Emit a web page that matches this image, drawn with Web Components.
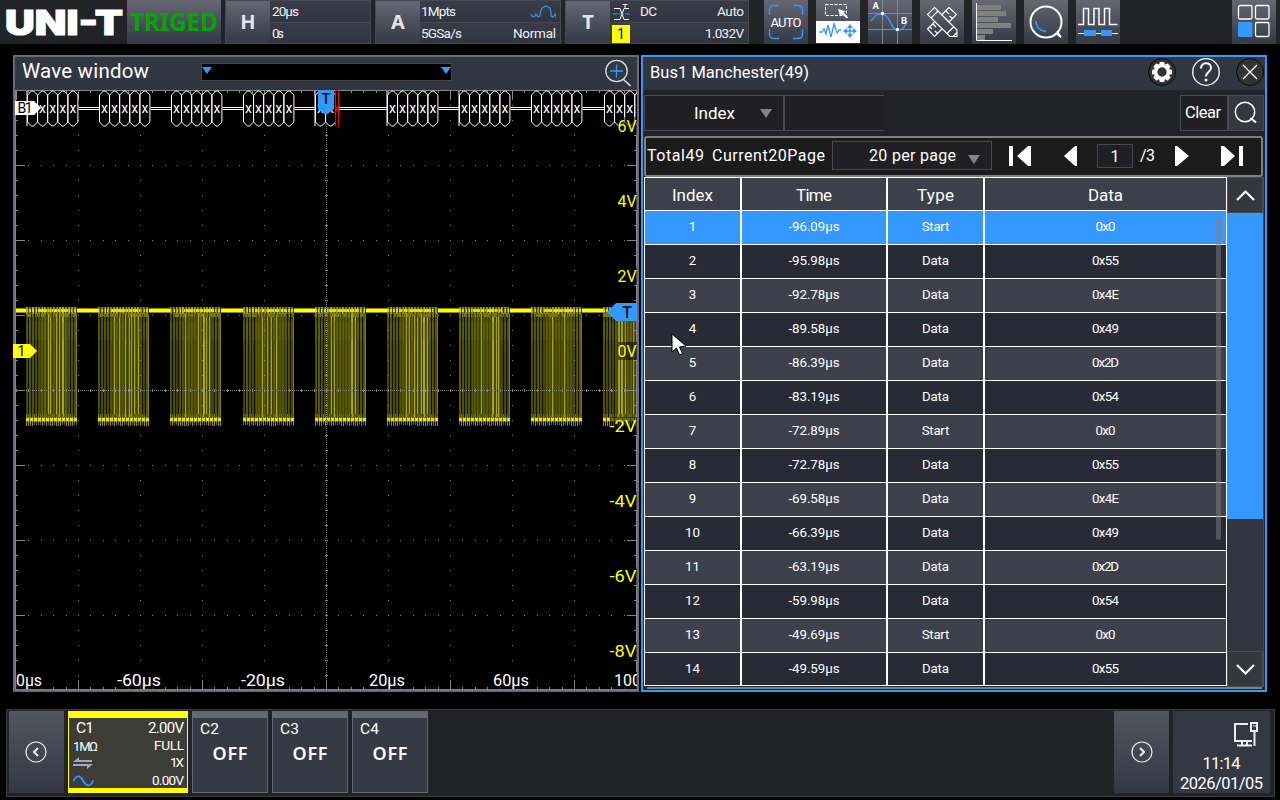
<!DOCTYPE html>
<html lang="en">
<head>
<meta charset="utf-8">
<title>Oscilloscope</title>
<style>
  html, body { margin: 0; background: #000; }
  body {
    width: 1280px;
    height: 800px;
    overflow: hidden;
    font-family: Roboto, "Liberation Sans", sans-serif;
    color: #fff;
    --blue: #3398ff;
    --bar: #222327;
    --face: linear-gradient(#666773, #3a404b 85%, #363c46);
  }
</style>
</head>
<body>
<scope-app></scope-app>

<script>
// Text that is tracked in or out to fill a given width
class FitText extends HTMLElement {
  constructor() {
    super();
    this.attachShadow({ mode: "open" });
    this.shadowRoot.innerHTML = "<style>:host { display: inline-flex; white-space: pre; line-height: 1; }</style><span><slot></slot></span>";
  }

  connectedCallback() {
    const span = this.shadowRoot.querySelector("span");
    const size = this.getAttribute("size");
    if (size) this.style.fontSize = size + "px";
    const width = Number(this.getAttribute("w"));
    const count = this.textContent.length;
    if (!width || count < 2) return;
    const natural = span.getBoundingClientRect().width;
    const spacing = (width - natural) / (count - 1);
    span.style.letterSpacing = spacing + "px";
    span.style.marginRight = -spacing + "px";
  }
}

class ReadoutBox extends HTMLElement {
  constructor() {
    super();
    this.attachShadow({ mode: "open" });
    this.shadowRoot.innerHTML = `
      <style>
        :host { display: flex; box-sizing: border-box; height: 44px; border: 1px solid #464953; background: #333741; margin-right: 4px; }
        .key { width: 44px; display: flex; align-items: center; justify-content: center; background: var(--face); font-family: "Noto Sans", sans-serif; font-weight: 700; font-size: 20px; line-height: 1; color: #e4e4e6; }
        .lines { flex: 1; display: grid; grid-template-rows: 21px 20px; row-gap: 1px; background: #464953; }
        .line { display: flex; align-items: center; justify-content: space-between; background: linear-gradient(#383c47, #31353f); padding: 1px 4px 0 2px; font-size: 13.5px; color: #f0f0f0; box-sizing: border-box; }
      </style>
      <div class="key"></div>
      <div class="lines">
        <div class="line"><slot name="top"></slot><slot name="top-end"></slot></div>
        <div class="line"><slot name="bottom"></slot><slot name="bottom-end"></slot></div>
      </div>
    `;
  }

  connectedCallback() {
    this.shadowRoot.querySelector(".key").textContent = this.getAttribute("key");
  }
}

class ToolButton extends HTMLElement {
  constructor() {
    super();
    this.attachShadow({ mode: "open" });
    this.shadowRoot.innerHTML = `
      <style>
        :host { display: block; width: 44px; height: 44px; background: var(--face); }
        ::slotted(svg) { display: block; }
      </style>
      <slot></slot>
    `;
  }
}

class TopBar extends HTMLElement {
  constructor() {
    super();
    this.attachShadow({ mode: "open" });
    this.shadowRoot.innerHTML = `
      <style>
        :host { display: flex; height: 44px; background: var(--bar); }
        .logo { width: 127px; height: 44px; }
        .state { width: 94px; height: 44px; margin-right: 4px; background: var(--face); display: flex; align-items: center; justify-content: center; color: #00a800; font-family: "Noto Sans", sans-serif; font-weight: 700; }
        .tools { display: flex; gap: 8px; margin-left: 11px; }
        .apps { margin-left: auto; margin-right: 4px; }
        svg { display: block; }
        .source { display: flex; align-items: center; gap: 10px; }
        .ch { width: 18px; height: 18px; background: #ff0; color: #000; display: flex; align-items: center; justify-content: center; font-size: 14px; }
      </style>
      <svg class="logo" viewBox="0 0 127 44">
        <text x="5" y="34.5" font-family="Inter, sans-serif" font-weight="900" font-size="33.5" fill="#fff" stroke="#fff" textLength="118" lengthAdjust="spacingAndGlyphs">UNI-T</text>
      </svg>
      <div class="state"><fit-text size="24.5" w="88">TRIGED</fit-text></div>
      <readout-box key="H" style="width:146px">
        <fit-text slot="top" w="27">20µs</fit-text>
        <fit-text slot="bottom" w="12">0s</fit-text>
      </readout-box>
      <readout-box key="A" style="width:186px">
        <fit-text slot="top" w="35" style="margin-left:-1px">1Mpts</fit-text>
        <svg slot="top-end" width="26" height="14" fill="none" stroke="#3398ff" stroke-width="1.2"><path d="M1 9l2 3 2-1 1-2 2 3 2-1V8l2-5 2-1 2-1 2 1 2 1 1 5v3l2 1 2-3 1 3 2-3"/></svg>
        <fit-text slot="bottom" w="41" style="margin-left:-1px">5GSa/s</fit-text>
        <fit-text slot="bottom-end" w="43">Normal</fit-text>
      </readout-box>
      <readout-box key="T" style="width:184px">
        <div slot="top" class="source">
          <svg width="18" height="19" fill="none" stroke="#fff"><path d="M2 5.5h6l4 11h5M17 5.5h-5l-4 11H2M10.500 1.500h5M13 2v3"/><path d="M1 11h17" stroke="#3398ff" stroke-dasharray="5 1"/></svg>
          <fit-text w="17">DC</fit-text>
        </div>
        <fit-text slot="top-end" w="27">Auto</fit-text>
        <div slot="bottom" class="ch">1</div>
        <fit-text slot="bottom-end" w="39">1.032V</fit-text>
      </readout-box>
      <div class="tools">
        <tool-button><svg width="44" height="44">
          <path d="M5.500 15V10q0-4.500 4.500-4.500h5M29 5.500h5q4.500 0 4.500 4.500v5M38.500 29v5q0 4.500-4.500 4.500h-5M15 38.500h-5q-4.500 0-4.500-4.500v-5" fill="none" stroke="#3398ff" stroke-width="1.400"/>
          <text x="6.500" y="26.500" font-size="13" fill="#fff" textLength="31">AUTO</text></svg></tool-button>
        <tool-button><svg width="44" height="44">
          <rect y="21" width="44" height="22" fill="#fff"/>
          <rect x="9.500" y="4.500" width="21" height="11" fill="none" stroke="#fff" stroke-dasharray="3 1.500"/>
          <path d="M22 9l2 7 1.800-1.800 5.200 4.300 1-1.200-4.500-5 2.500-1z" fill="#fff"/>
          <path d="M3 32h3l2-3 2 5 2-9 3 12 3-13 3 9 2-3h2" fill="none" stroke="#3398ff" stroke-width="1.300"/>
          <path d="M28 31h12M34 25v12" stroke="#3398ff" stroke-width="1.500"/>
          <path d="M34 24l3 4h-6zM34 38l3-4h-6zM27 31l4-3v6zM41 31l-4-3v6z" fill="#3398ff"/></svg></tool-button>
        <tool-button><svg width="44" height="44">
          <path d="M0 13.500h44M0 29.500h44M14.500 0v44M29.500 0v44" stroke="#868894"/>
          <path d="M3 21C8 14 12 12 17 15C23 19 23 30 30 30C35 30 37 27 39 21" fill="none" stroke="#3398ff" stroke-width="1.500"/>
          <circle cx="14.500" cy="13.500" r="1.700" fill="#fff"/><circle cx="29.500" cy="29.500" r="1.700" fill="#fff"/>
          <text x="4.500" y="9" font-size="9.500" font-weight="700" fill="#fff">A</text>
          <text x="33" y="24" font-size="9.500" font-weight="700" fill="#fff">B</text></svg></tool-button>
        <tool-button><svg width="44" height="44" fill="none" stroke="#fff" stroke-width="1.100">
          <path d="M14.500 7.500L37 30v6.500h-7L7.500 14.500zM11 18l7-7M27 33.500l6.500-6.500M33 36.500l4-4"/>
          <path d="M29 7.500l7.500 7L29 22M22 29l-7.500 7.500-7-7.500 7.500-7.500M21.500 15L29 7.500M32.500 18.500l-3-2.500M29 22l-3-3M13 24l3 3M10 27l2 2M17 33l-2-2M26 11l3 3"/></svg></tool-button>
        <tool-button><svg width="44" height="44">
          <path d="M5 5h24v5H5zM5 11h29v5H5zM5 17h21v5H5zM5 23h34v5H5zM5 29h16v5H5zM5 35h8v5H5z" fill="#808080"/>
          <path d="M4.500 3v37.500H40" fill="none" stroke="#fff"/></svg></tool-button>
        <tool-button><svg width="44" height="44" fill="none">
          <circle cx="22" cy="22" r="15.500" stroke="#fff" stroke-width="2"/>
          <path d="M31.500 33l5.500 4.500M33 31l4 6" stroke="#fff" stroke-width="1.500"/>
          <path d="M12 21C12 27 16 31 22 31.500" stroke="#3398ff" stroke-width="1.800"/></svg></tool-button>
        <tool-button><svg width="44" height="44" fill="none">
          <path d="M2 24.500h5.500v-16h5v16h5.500v-16h5v16h5.500v-16h5v16h8" stroke="#fff" stroke-width="1.500"/>
          <path d="M2 33.500h40" stroke="#fff"/><path d="M8 30h12v6H8zM25 30h11v6H25z" fill="#3398ff"/></svg></tool-button>
      </div>
      <tool-button class="apps"><svg width="44" height="44" fill="none" stroke="#fff" stroke-width="1.300">
        <rect x="6.500" y="5.500" width="13.500" height="13.500" rx="1.500"/><rect x="23.500" y="5.500" width="13.500" height="13.500" rx="1.500"/>
        <rect x="6" y="22" width="14.500" height="15" rx="1.500" fill="#3398ff" stroke="none"/><rect x="23.500" y="22.500" width="13.500" height="14" rx="1.500"/></svg></tool-button>
    `;
  }
}

// Graticule, bus decode row and channel 1 trace
class WavePlot extends HTMLElement {
  constructor() {
    super();
    this.attachShadow({ mode: "open" });
    this.shadowRoot.innerHTML = `
      <style>
        :host { display: block; height: 600px; background: #000; }
        svg { display: block; overflow: visible; font-size: 16px; }
      </style>
      <svg width="622" height="600" viewBox="15 90 622 600">
        <defs><clipPath id="area"><rect x="15" y="90" width="622" height="600"/></clipPath></defs>
        <g clip-path="url(#area)">
          <g id="trace" shape-rendering="crispEdges"></g>
          <path id="grid" stroke="#858585" fill="none" shape-rendering="crispEdges"/>
          <g id="bus"></g>
          <g id="labels"></g>
        </g>
        <path d="M15 101h19l7 7-7 7H15z" fill="#fff"/>
        <text x="17.500" y="113" font-size="14" fill="#000" textLength="15">B1</text>
        <path d="M318 90h16v19l-8 6-8-6z" fill="#3398ff"/>
        <text x="326" y="104" text-anchor="middle" font-size="15" font-weight="500" fill="#111">T</text>
        <path d="M13 344h17l7 7-7 7H13z" fill="#ff0"/>
        <text x="21.500" y="356" text-anchor="middle" font-size="14" fill="#000">1</text>
        <path d="M607 312l9-9h21v18h-21z" fill="#3398ff"/>
        <text x="627" y="318" text-anchor="middle" font-size="16" font-weight="500" fill="#111">T</text>
      </svg>
    `;
  }

  connectedCallback() {
    this.drawGrid();
    this.drawTrace();
    this.drawBus();
    this.drawLabels();
  }

  drawGrid() {
    let d = "M15 90.5H637M15.5 90V690M15 689.5H637M636.500 90V690";
    const dot = (x, y) => { d += `M${Math.round(x)} ${y + 0.5}h1`; };
    for (let i = 0; i <= 50; i++) {
      const x = 16 + i * 12.4;
      const major = i % 5 === 0;
      for (let y = 165; y < 690; y += 75) if (y !== 390) dot(x, y);
      d += `M${Math.round(x) + 0.5} 90v${major ? 10 : 3}M${Math.round(x) + 0.5} 690v${major ? -10 : -3}`;
      d += `M${Math.round(x) + 0.5} 389v3`;
    }
    for (let j = 0; j <= 40; j++) {
      const y = 90 + j * 15;
      const len = j % 5 === 0 ? 10 : 3;
      for (let x = 78; x < 636; x += 62) if (x !== 326) dot(x, y);
      d += `M15 ${y + 0.5}h${len}M637 ${y + 0.5}h${-len}M325 ${y + 0.5}h3`;
    }
    for (let x = 16; x < 637; x += 2) dot(x, 390);
    for (let y = 90; y < 690; y += 2) dot(326, y);
    this.shadowRoot.getElementById("grid").setAttribute("d", d);
  }

  drawTrace() {
    let out = "";
    let seed = 7;
    const random = () => (seed = (seed * 16807) % 2147483647) / 2147483647;
    const bar = (x, y, w, h, color) => {
      out += `<rect x="${x}" y="${y}" width="${w}" height="${h}" fill="${color}"/>`;
    };
    bar(15, 308, 12, 5, "#8a8a00");
    bar(15, 309, 12, 3, "#ff0");
    for (let g = 0; g < 9; g++) {
      const start = Math.round(26.2 + g * 72.12);
      bar(start + 51, 308, 22, 5, "#8a8a00");
      bar(start + 51, 309, 22, 3, "#ff0");
      for (let c = 0; c < 51; c++) {
        const x = start + c;
        const middle = c > 13 && c < 42;
        const r = random();
        const gap = c % 3 === 2;
        let v = gap ? (middle ? 62 : 14) : 66 + r * 24;
        if (!gap && middle) v += 12;
        if (!gap && middle && r > 0.7) v = 145 + r * 30;
        if (c === 50) v = 125;
        v = Math.round(v);
        bar(x, 312, 1, 106, `rgb(${v},${v},0)`);
        if (!gap) bar(x, 322, 1, 18, "rgba(120,120,0,.25)");
        const hi = gap ? 50 : 110 + Math.round(random() * 70);
        bar(x, 307, 1, 7, `rgb(${hi},${hi},0)`);
        if (!gap || middle) bar(x, 309, 1, 3, random() > 0.3 ? "#e0e000" : "#a0a000");
        if (random() > 0.4) bar(x, 313, 1, 4, "#777700");
        if (c % 2 === 0) bar(x, 414, 1, 11, "#6a6a00");
        if (c % 2 === 0 && random() > 0.5) bar(x, 421, 1, 5, "#909000");
        bar(x, 417, 1, 5, c % 2 === 0 ? "#a0a000" : "#454500");
        bar(x, 418, 1, 3, c % 4 === 3 ? "#606000" : "#e6e600");
      }
    }
    this.shadowRoot.getElementById("trace").innerHTML = out;
  }

  drawBus() {
    let cells = "";
    let idle = "";
    let marks = "";
    for (let g = 0; g < 9; g++) {
      const start = Math.round(26.7 + g * 72.1) + 0.5;
      const count = g === 4 ? 2 : 5;
      const end = g === 4 ? 339 : start + 51;
      const next = Math.round(26.7 + (g + 1) * 72.1);
      idle += `M${end} 107.500H${next}M${end} 109.500H${next}`;
      for (let i = 0; i < count; i++) {
        const x = start + i * 10.1;
        cells += `M${x} 95l4-4h2l4 4v27l-4 4h-2l-4-4z`;
        // the first mark of the row lies under the bus badge
        if (g || i) marks += `<text x="${x + 5}" y="113" text-anchor="middle">x</text>`;
      }
      if ([0, 4, 5, 6].includes(g)) cells += `M${start - 0.5} 91v35`;
    }
    this.shadowRoot.getElementById("bus").innerHTML = `
      <path d="M36 107.500h2${idle}" stroke="#fff" fill="none"/>
      <path d="${cells}" stroke="#fff" fill="#000"/>
      <g fill="#fff" font-size="14">${marks}</g>
      <rect x="335.500" y="90.500" width="3" height="36" rx="1" stroke="red" fill="#000"/>
      <text x="337" y="113" font-size="14" fill="red" text-anchor="middle">x</text>
    `;
  }

  drawLabels() {
    let out = "";
    ["6V", "4V", "2V", "0V", "-2V", "-4V", "-6V", "-8V"].forEach((text, i) => {
      const w = text.length === 3 ? 27 : 19;
      out += `<rect x="${637 - w}" y="${117 + i * 75}" width="${w}" height="18" fill="#000" opacity=".5"/>
        <text x="${636.500 - w}" y="${132 + i * 75}" fill="#ff0" font-size="16.500" textLength="${w}" lengthAdjust="spacingAndGlyphs">${text}</text>`;
    });
    [["0µs", 16, 26], ["-60µs", 117, 44], ["-20µs", 241, 44], ["20µs", 369, 36], ["60µs", 493, 36], ["100", 614, 27]].forEach(([text, x, w]) => {
      out += `<rect x="${x}" y="672" width="${w}" height="17" fill="#000" opacity=".7"/>
        <text x="${x}" y="686" fill="#fff" textLength="${w}" lengthAdjust="spacingAndGlyphs">${text}</text>`;
    });
    this.shadowRoot.getElementById("labels").innerHTML = out;
  }
}

class WaveWindow extends HTMLElement {
  constructor() {
    super();
    this.attachShadow({ mode: "open" });
    this.shadowRoot.innerHTML = `
      <style>
        :host { display: block; box-sizing: border-box; width: 626px; height: 637px; border: 2px solid #696b78; }
        header { display: flex; align-items: center; height: 33px; background: linear-gradient(#343741, #2f3641); }
        .title { width: 186px; padding-left: 7px; box-sizing: border-box; margin-top: -4px; }
        .range { box-sizing: border-box; width: 251px; height: 18px; margin-top: -3px; border: 1px solid #444; background: #000; display: flex; justify-content: space-between; }
        .range svg { margin-top: 3px; }
        .zoom { margin-left: auto; margin-right: 6px; }
      </style>
      <header>
        <fit-text class="title" size="20.500" w="127">Wave window</fit-text>
        <div class="range">
          <svg width="11" height="8"><path d="M0 0h10l-5 7z" fill="#3398ff"/></svg>
          <svg width="11" height="8"><path d="M1 0h10l-5 7z" fill="#3398ff"/></svg>
        </div>
        <svg class="zoom" width="28" height="30" fill="none">
          <circle cx="13.500" cy="12" r="10.700" stroke="#ddd" stroke-width="1.300"/><path d="M20 20l7.500 7" stroke="#ddd" stroke-width="1.600"/>
          <path d="M7 12h13M13.500 5.500v13" stroke="#3398ff" stroke-width="1.300"/></svg>
      </header>
      <wave-plot></wave-plot>
    `;
  }
}

const eventRows = [
  ["1", "-96.09µs", "Start", "0x0"],
  ["2", "-95.98µs", "Data", "0x55"],
  ["3", "-92.78µs", "Data", "0x4E"],
  ["4", "-89.58µs", "Data", "0x49"],
  ["5", "-86.39µs", "Data", "0x2D"],
  ["6", "-83.19µs", "Data", "0x54"],
  ["7", "-72.89µs", "Start", "0x0"],
  ["8", "-72.78µs", "Data", "0x55"],
  ["9", "-69.58µs", "Data", "0x4E"],
  ["10", "-66.39µs", "Data", "0x49"],
  ["11", "-63.19µs", "Data", "0x2D"],
  ["12", "-59.98µs", "Data", "0x54"],
  ["13", "-49.69µs", "Start", "0x0"],
  ["14", "-49.59µs", "Data", "0x55"],
];

class EventTable extends HTMLElement {
  constructor() {
    super();
    this.attachShadow({ mode: "open" });
    this.shadowRoot.innerHTML = `
      <style>
        :host { display: flex; height: 510px; position: relative; }
        .grid { box-sizing: border-box; width: 583px; height: 509px; padding: 1px; background: #fff; display: grid; grid-template-columns: 95px 144px 95px 241px; grid-template-rows: 32px repeat(13, 33px) 32px; gap: 1px 2px; }
        .cell { display: flex; align-items: center; justify-content: center; font-size: 13.300px; padding-bottom: 1px; box-sizing: border-box; background: #3e414b; }
        .head { font-size: 17px; background: #3c404a; padding: 2px 0 0; }
        .even { background: #282b35; }
        .active { background: var(--blue); }
        .thumb { position: absolute; left: 572px; top: 39px; width: 5px; height: 324px; border-radius: 2px; background: rgba(128, 128, 128, .5); }
        .scroll { width: 37px; display: flex; flex-direction: column; background: #323640; box-sizing: border-box; border-right: 1px solid #484a52; }
        .step { box-sizing: border-box; height: 36px; flex: none; border: 1px solid #4a4b53; background: #36363e; }
        .pos { height: 306px; background: var(--blue); }
        .step:last-child { margin-top: auto; }
      </style>
      <div class="grid"></div>
      <div class="thumb"></div>
      <div class="scroll">
        <div class="step"><svg width="34" height="34"><path d="M9 22l8.500-8.500L26 22" fill="none" stroke="#fff" stroke-width="2.200"/></svg></div>
        <div class="pos"></div>
        <div class="step"><svg width="34" height="34"><path d="M9 13l8.500 8.500L26 13" fill="none" stroke="#fff" stroke-width="2.200"/></svg></div>
      </div>
    `;
  }

  connectedCallback() {
    const widths = { Start: 27.5, Data: 27, "0x0": 20 };
    let html = `
      <div class="cell head"><fit-text w="41">Index</fit-text></div>
      <div class="cell head"><fit-text w="36">Time</fit-text></div>
      <div class="cell head"><fit-text w="37">Type</fit-text></div>
      <div class="cell head"><fit-text w="35">Data</fit-text></div>`;
    eventRows.forEach((row, i) => {
      const style = i === 0 ? "active" : i % 2 ? "even" : "";
      row.forEach((text, col) => {
        const w = col === 0 ? 0 : col === 1 ? 51 : widths[text] || 27;
        html += `<div class="cell ${style}"><fit-text w="${w}">${text}</fit-text></div>`;
      });
    });
    this.shadowRoot.querySelector(".grid").innerHTML = html;
  }
}

class PagerBar extends HTMLElement {
  constructor() {
    super();
    this.attachShadow({ mode: "open" });
    this.shadowRoot.innerHTML = `
      <style>
        :host { display: flex; align-items: center; box-sizing: border-box; width: 619px; height: 41px; margin-left: 1px; border: 2px solid #808080; border-radius: 3px; background: #1b1b1b; font-size: 16px; padding: 0 0 2px 1px; }
        .size { box-sizing: border-box; width: 160px; height: 29px; border: 1px solid #484a52; background: #202024; margin-left: 7px; padding: 0 11px 0 36px; display: flex; align-items: center; justify-content: space-between; }
        .size svg { margin-top: 2px; }
        .page { box-sizing: border-box; width: 36px; height: 24px; margin: 1px 7px 0 20px; border: 1px solid #484a52; background: #202024; display: flex; align-items: center; justify-content: center; }
        svg { display: block; flex: none; }
      </style>
      <fit-text w="57">Total49</fit-text>
      <fit-text w="113" style="margin-left:8px">Current20Page</fit-text>
      <div class="size"><fit-text w="87">20 per page</fit-text><svg width="12" height="14"><path d="M0 5h12l-6 9z" fill="#858585"/></svg></div>
      <svg width="24" height="20" style="margin-left:16px"><path d="M1 0h4v20H1zM23 0v20h-3L9 10 20 0z" fill="#fff"/></svg>
      <svg width="14" height="20" style="margin-left:31px"><path d="M14 0v20h-2L1 10 12 0z" fill="#fff"/></svg>
      <div class="page">1</div>
      <fit-text w="15">/3</fit-text>
      <svg width="14" height="20" style="margin-left:20px"><path d="M0 0v20h2l12-10L2 0z" fill="#fff"/></svg>
      <svg width="24" height="20" style="margin-left:32px"><path d="M0 0v20h3l11-10L3 0zM18 0h4v20h-4z" fill="#fff"/></svg>
    `;
  }
}

class BusPanel extends HTMLElement {
  constructor() {
    super();
    this.attachShadow({ mode: "open" });
    this.shadowRoot.innerHTML = `
      <style>
        :host { display: block; box-sizing: border-box; width: 626px; height: 637px; margin-left: 2px; border: 2px solid var(--blue); background: #22222b; }
        header { display: flex; align-items: center; height: 33px; padding: 0 1px 0 7px; background: linear-gradient(#343741, #2f3641); }
        header svg { margin-left: 16px; margin-top: -3px; }
        header fit-text { margin-top: -1px; }
        header svg:first-of-type { margin-left: auto; }
        .filter { display: flex; height: 36px; margin: 5px 1px 5px; font-size: 17px; }
        .filter > div { box-sizing: border-box; border: 1px solid #484a52; background: #202024; display: flex; align-items: center; }
        .field { width: 140px; padding: 0 11px 0 49px; justify-content: space-between; }
        .value { width: 100px; border-right: 0 !important; }
        .clear { width: 48px; margin-left: auto; justify-content: center; padding: 1px 2px 0 0; }
        .find { width: 36px; background: #363740 !important; }
        event-table { margin-left: 1px; }
        .foot { height: 2px; margin: 0 3px 0 4px; background: #808080; }
      </style>
      <header>
        <fit-text size="16.500" w="159">Bus1 Manchester(49)</fit-text>
        <svg width="28" height="28"><circle cx="14" cy="14" r="13.500" fill="#333" stroke="#080808"/>
          <g id="gear" fill="#fff"></g><circle cx="14" cy="14" r="6.400" stroke="#fff" stroke-width="3.500" fill="#333"/></svg>
        <svg width="28" height="28" fill="none"><circle cx="14" cy="14" r="13.300" stroke="#fff" stroke-width="1.300"/>
          <path d="M9 10.500C9 3.500 19 3.500 19 10C19 14 14 13.500 14 18.500" stroke="#fff" stroke-width="2"/><circle cx="14" cy="22" r="1.500" fill="#fff"/></svg>
        <svg width="28" height="28"><circle cx="14" cy="14" r="13.500" fill="#333" stroke="#080808"/><path d="M7 7l14 14M21 7L7 21" stroke="#fff" stroke-width="1.200"/></svg>
      </header>
      <div class="filter">
        <div class="field"><fit-text w="41">Index</fit-text><svg width="12" height="10"><path d="M0 1h12l-6 9z" fill="#858585"/></svg></div>
        <div class="value"></div>
        <div class="clear"><fit-text size="16.500" w="36">Clear</fit-text></div>
        <div class="find"><svg width="34" height="34" fill="none" stroke="#fff"><circle cx="16" cy="16" r="9.700" stroke-width="1.500"/><path d="M21.500 22l5.500 4.500" stroke-width="2.200"/></svg></div>
      </div>
      <pager-bar></pager-bar>
      <event-table></event-table>
      <div class="foot"></div>
    `;
    let teeth = "";
    for (let a = 0; a < 360; a += 45) {
      teeth += `<rect x="11.500" y="4" width="5" height="4" rx="1" transform="rotate(${a} 14 14)"/>`;
    }
    this.shadowRoot.getElementById("gear").innerHTML = teeth;
  }
}

class ChannelCard extends HTMLElement {
  constructor() {
    super();
    this.attachShadow({ mode: "open" });
    this.shadowRoot.innerHTML = `
      <style>
        :host { display: flex; flex-direction: column; box-sizing: border-box; width: 76px; height: 82px; margin-right: 4px; border: 1px solid #656773; border-top-width: 7px; background: #363a45; }
        .name { display: flex; padding: 4px 0 0 7px; }
        .off { display: flex; justify-content: center; margin-top: 6px; font-family: "Noto Sans", sans-serif; font-weight: 600; }
      </style>
      <div class="name"></div>
      <div class="off"><fit-text size="18" w="35">OFF</fit-text></div>
    `;
  }

  connectedCallback() {
    this.shadowRoot.querySelector(".name").innerHTML = `<fit-text size="15.500" w="19">${this.getAttribute("name")}</fit-text>`;
  }
}

class ActiveChannel extends HTMLElement {
  constructor() {
    super();
    this.attachShadow({ mode: "open" });
    this.shadowRoot.innerHTML = `
      <style>
        :host { display: grid; grid-template-rows: 19px 16px 18px 17px; box-sizing: border-box; width: 120px; height: 82px; margin-right: 4px; padding-top: 1px; border: 1px solid #ff0; border-top-width: 7px; border-bottom-width: 5px; background: #3d3d38; font-size: 13.500px; }
        div { display: flex; align-items: center; justify-content: space-between; padding: 0 3px 0 4px; }
        .top { font-size: 15px; padding-left: 7px; }
      </style>
      <div class="top"><fit-text size="15.500" w="18">C1</fit-text><fit-text w="36">2.00V</fit-text></div>
      <div><fit-text size="13" w="25">1MΩ</fit-text><fit-text w="30">FULL</fit-text></div>
      <div><svg width="20" height="12" fill="#a5a5c0"><path d="M0 5l6-5v3h13v2zM20 7H0v2h14v3z"/></svg><fit-text w="14">1X</fit-text></div>
      <div><svg width="21" height="14" fill="none" stroke="#3398ff" stroke-width="1.800"><path d="M0 7C4 1 7 1 10 6.500S17 14 20.500 6"/></svg><fit-text w="32">0.00V</fit-text></div>
    `;
  }
}

class BottomBar extends HTMLElement {
  constructor() {
    super();
    this.attachShadow({ mode: "open" });
    this.shadowRoot.innerHTML = `
      <style>
        :host { display: flex; box-sizing: border-box; width: 1269px; height: 88px; margin: 17px 0 0 6px; padding: 1px 4px 0 2px; border: 1px solid #3a3b42; background: var(--bar); }
        .nav { box-sizing: border-box; width: 55px; height: 82px; display: flex; align-items: center; justify-content: center; background: linear-gradient(#52555e, #343843); margin-right: 4px; padding: 0 2px 1px 0; }
        .next { margin-left: auto; padding-right: 0; }
        .info { width: 97px; height: 82px; box-sizing: border-box; background: #343843; display: flex; flex-direction: column; align-items: center; font-size: 16.500px; padding-top: 9px; gap: 3px; }
        .info svg { align-self: flex-end; margin-right: 11px; flex: none; }
      </style>
      <div class="nav"><svg width="22" height="22" fill="none" stroke="#eee"><circle cx="11" cy="11" r="10" stroke-width="1.200"/><path d="M13 7l-4 4 4 4" stroke-width="2"/></svg></div>
      <active-channel></active-channel>
      <channel-card name="C2"></channel-card>
      <channel-card name="C3"></channel-card>
      <channel-card name="C4"></channel-card>
      <div class="nav next"><svg width="22" height="22" fill="none" stroke="#eee"><circle cx="11" cy="11" r="10" stroke-width="1.200"/><path d="M9 7l4 4-4 4" stroke-width="2"/></svg></div>
      <div class="info">
        <svg width="27" height="27" fill="none" stroke="#eee" stroke-width="2"><path d="M16 4H3v17h17M5 25.500h15M10 21v4M15 21v4M22.500 12v14"/><rect x="19" y="3" width="6" height="8"/><path d="M21 6h3" stroke-width="1"/></svg>
        <fit-text w="38" style="margin-top:6px">11:14</fit-text>
        <fit-text w="83">2026/01/05</fit-text>
      </div>
    `;
  }
}

class ScopeApp extends HTMLElement {
  constructor() {
    super();
    this.attachShadow({ mode: "open" });
    this.shadowRoot.innerHTML = `
      <style>
        :host { display: block; position: relative; height: 800px; }
        main { display: flex; padding: 11px 0 0 13px; }
        .pointer { position: absolute; left: 670px; top: 333px; }
      </style>
      <top-bar></top-bar>
      <main>
        <wave-window></wave-window>
        <bus-panel></bus-panel>
      </main>
      <bottom-bar></bottom-bar>
      <svg class="pointer" width="18" height="26"><path d="M2 1v18l4.500-4 3 7 3-1.500-3-6.500 6.500-1z" fill="#fff" stroke="#000"/></svg>
    `;
  }
}

customElements.define("fit-text", FitText);
customElements.define("readout-box", ReadoutBox);
customElements.define("tool-button", ToolButton);
customElements.define("top-bar", TopBar);
customElements.define("wave-plot", WavePlot);
customElements.define("wave-window", WaveWindow);
customElements.define("event-table", EventTable);
customElements.define("pager-bar", PagerBar);
customElements.define("bus-panel", BusPanel);
customElements.define("channel-card", ChannelCard);
customElements.define("active-channel", ActiveChannel);
customElements.define("bottom-bar", BottomBar);
customElements.define("scope-app", ScopeApp);
</script>
</body>
</html>
